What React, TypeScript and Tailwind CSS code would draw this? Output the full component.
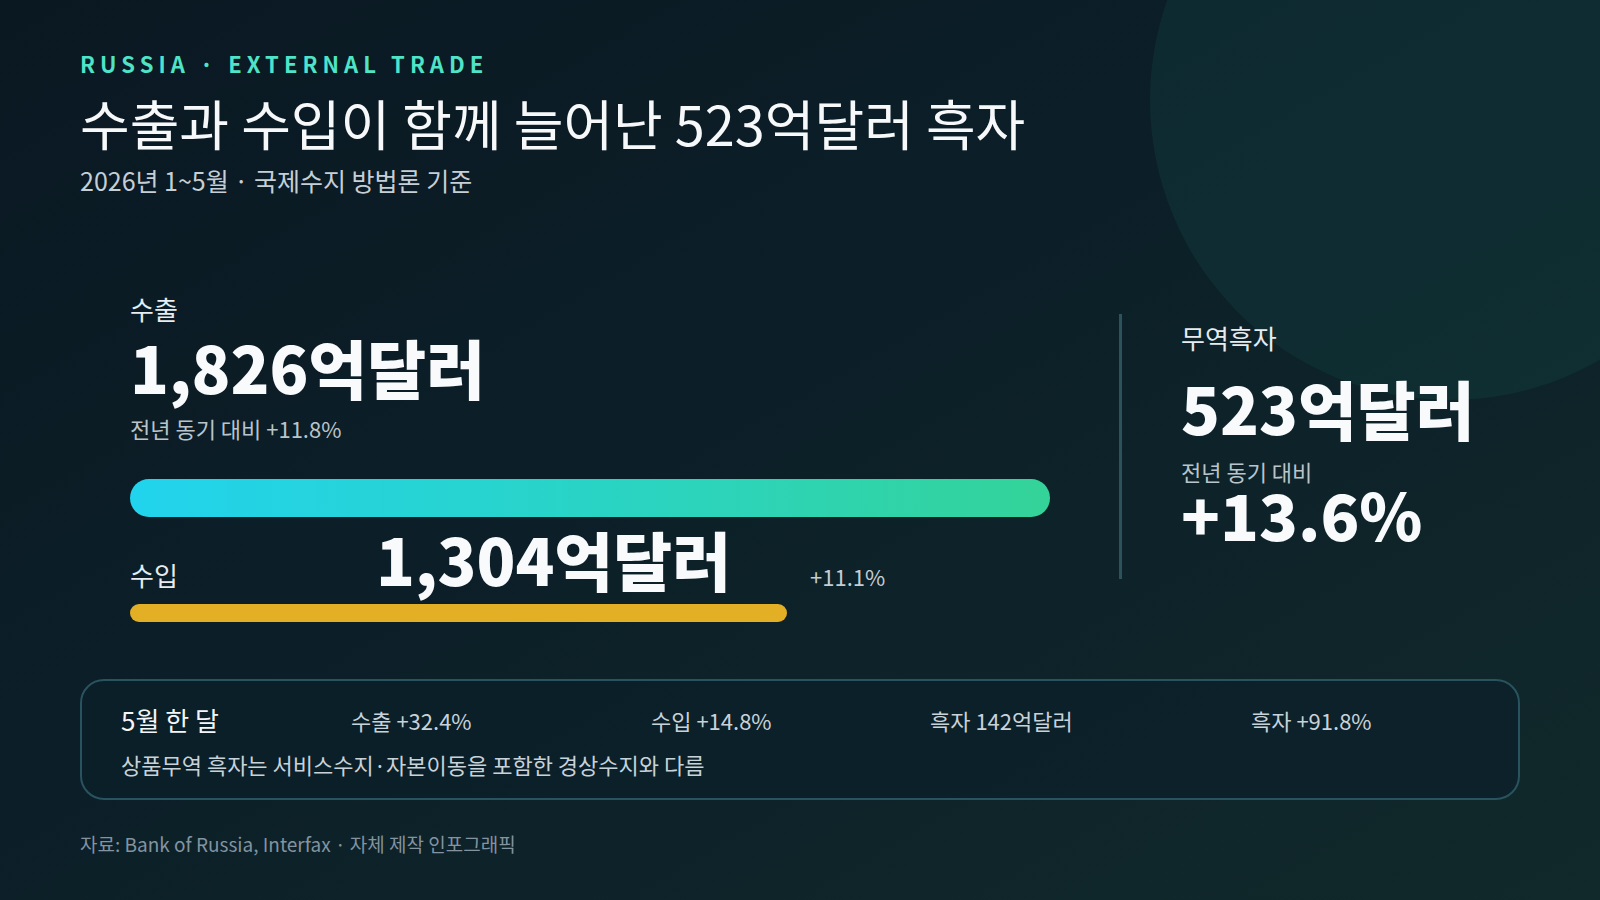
import React from 'react';

const font = "font-['Noto_Sans_CJK_KR','Noto_Sans',sans-serif]";

const monthly = [
    { label: '수출 +32.4%', width: 'w-[300px]' },
    { label: '수입 +14.8%', width: 'w-[279px]' },
    { label: '흑자 142억달러', width: 'w-[321px]' },
    { label: '흑자 +91.8%', width: 'w-auto' },
];

const EXPORT_VALUE = 1826;
const IMPORT_VALUE = 1304;
const BAR_MAX = 920;

const App: React.FC = () => {
    const importWidth = Math.round((IMPORT_VALUE / EXPORT_VALUE) * BAR_MAX);

    return (
        <div
            className={`relative w-full h-[900px] overflow-hidden bg-[linear-gradient(150deg,#0a1822_0%,#0c1f28_45%,#11292b_100%)] ${font}`}
        >
            {/* background circle */}
            <div className="absolute left-[1150px] top-[-200px] w-[600px] h-[600px] rounded-full bg-[#14504a]/25" />

            <div className="relative px-[80px] pt-[52px]">
                {/* Header */}
                <div className="text-[22px] leading-none font-bold tracking-[0.23em] text-[#4fe3c7]">
                    RUSSIA · EXTERNAL TRADE
                </div>
                <h1 className="mt-[19px] text-[54px] leading-[60px] font-normal text-[#f6f8f9]">
                    수출과 수입이 함께 늘어난 523억달러 흑자
                </h1>
                <p className="mt-[12px] text-[25px] leading-[30px] text-[#c6cfd6]">
                    2026년 1~5월 · 국제수지 방법론 기준
                </p>

                {/* Main figures */}
                <div className="mt-[98px] flex items-start">
                    <div className="ml-[50px] w-[920px]">
                        <div className="text-[26px] leading-[32px] text-[#e6ecef]">수출</div>
                        <div className="mt-[5px] text-[64px] leading-[72px] font-black text-[#f8fafc]">
                            1,826억달러
                        </div>
                        <div className="mt-[12px] text-[22px] leading-[28px] text-[#b9c4cb]">
                            전년 동기 대비 +11.8%
                        </div>
                        <div className="mt-[37px] h-[38px] w-[920px] rounded-full bg-gradient-to-r from-[#22d3ee] to-[#34d399]" />
                        <div className="mt-[5px] flex items-baseline">
                            <span className="w-[246px] text-[26px] leading-[32px] text-[#e6ecef]">수입</span>
                            <span className="text-[64px] leading-[72px] font-black text-[#f8fafc]">1,304억달러</span>
                            <span className="ml-[79px] text-[22px] leading-[28px] text-[#c3cdd4]">+11.1%</span>
                        </div>
                        <div
                            className="mt-[10px] h-[18px] rounded-full bg-[#e2af25]"
                            style={{ width: importWidth }}
                        />
                    </div>

                    <div className="ml-[69px] mt-[21px] h-[265px] w-[3px] bg-[#2d525a]" />

                    <div className="ml-[59px] mt-[29px]">
                        <div className="text-[26px] leading-[32px] text-[#e6ecef]">무역흑자</div>
                        <div className="mt-[17px] text-[64px] leading-[72px] font-black text-[#f8fafc]">
                            523억달러
                        </div>
                        <div className="mt-[14px] text-[22px] leading-[28px] text-[#b9c4cb]">전년 동기 대비</div>
                        <div className="text-[64px] leading-[56px] font-black text-[#f8fafc]">+13.6%</div>
                    </div>
                </div>

                {/* Monthly card */}
                <div className="mt-[57px] h-[121px] rounded-[24px] border-2 border-[#29535e] bg-[#0b1f29]/70 px-[39px] pt-[23px]">
                    <div className="flex items-center h-[32px]">
                        <span className="w-[230px] text-[26px] leading-[32px] font-normal text-[#f3f6f8]">5월 한 달</span>
                        {monthly.map((m) => (
                            <span key={m.label} className={`${m.width} text-[22px] leading-[32px] text-[#c8d2d9]`}>
                                {m.label}
                            </span>
                        ))}
                    </div>
                    <div className="mt-[12px] text-[22px] leading-[32px] text-[#c8d2d9]">
                        상품무역 흑자는 서비스수지·자본이동을 포함한 경상수지와 다름
                    </div>
                </div>

                {/* Footer */}
                <div className="mt-[32px] text-[19px] leading-[24px] text-[#8393a0]">
                    자료: Bank of Russia, Interfax · 자체 제작 인포그래픽
                </div>
            </div>
        </div>
    );
};

export default App;
